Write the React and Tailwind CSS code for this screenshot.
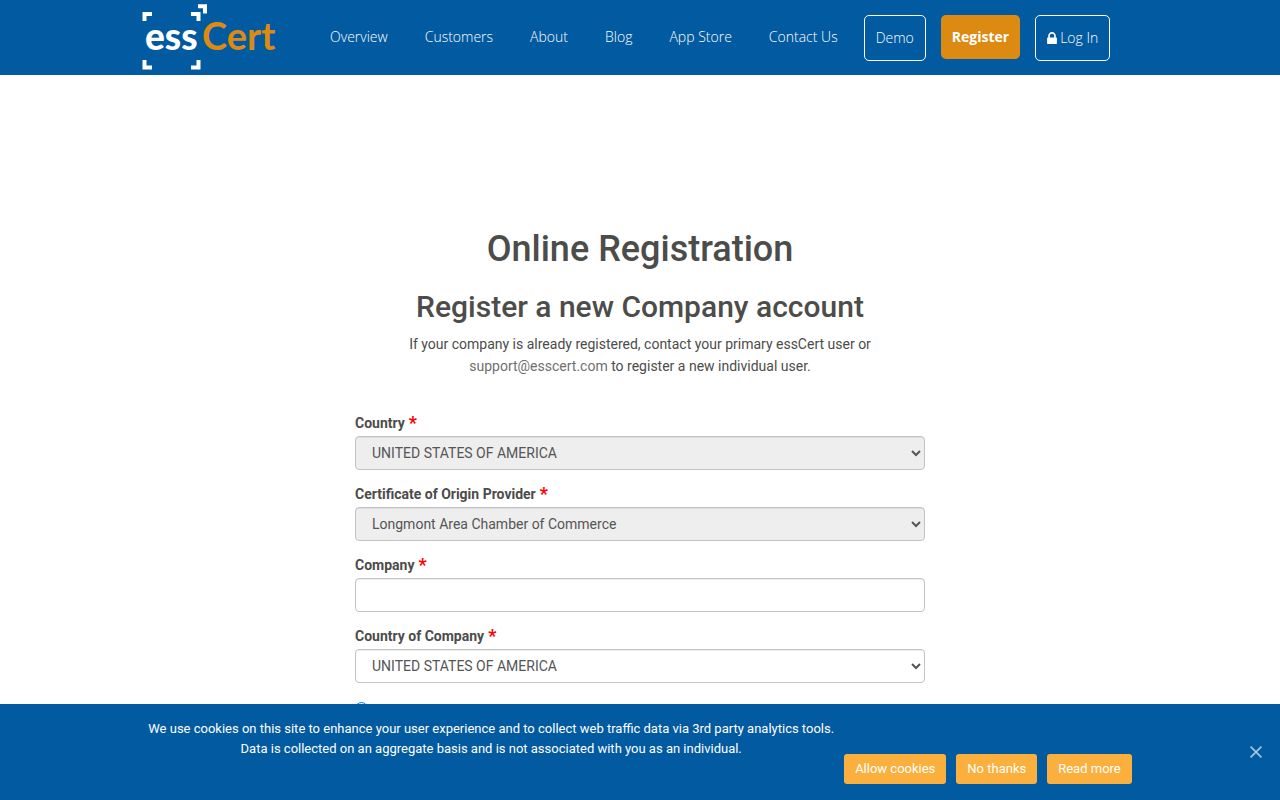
import React from "react";

const navLinks = ["Overview", "Customers", "About", "Blog", "App Store", "Contact Us"];

const Logo = () => (
  <a href="#home" aria-label="essCert" className="shrink-0">
    <svg width="136" height="75" viewBox="0 0 136 75" className="font-['Lato',sans-serif] font-bold">
      <g fill="#fff">
        <path d="M0.5 12h9.5v4H4.5v5h-4z" />
        <path d="M49 12h9.5v9h-4v-5H49z" />
        <path d="M56 4.3h9v9.2h-4V8.3h-5z" />
        <path d="M0.5 60h4v5.5H10v4H0.5z" />
        <path d="M54.5 60h4v9.5H49v-4h5.5z" />
      </g>
      <text x="3" y="50" fontSize="37" fill="#fff" className="font-black">ess</text>
      <text x="60" y="50" fontSize="38" fill="#dd8a12">Cert</text>
    </svg>
  </a>
);

const LockIcon = () => (
  <svg width="10" height="12" viewBox="0 0 1152 1408" fill="currentColor">
    <path
      transform="matrix(1 0 0 -1 0 1408)"
      d="M320 768h512v192q0 106-75 181t-181 75-181-75-75-181v-192zm832-96v-576q0-40-28-68t-68-28H96q-40 0-68 28T0 96v576q0 40 28 68t68 28h32v192q0 184 132 316t316 132 316-132 132-316V768h32q40 0 68-28t28-68z"
    />
  </svg>
);

const Header = () => (
  <header className="bg-[#025aa0] font-['Open_Sans',sans-serif] text-sm font-light text-white">
    <div className="mx-auto flex max-w-[996px] items-start">
      <Logo />
      <nav className="ml-[52px] flex items-start">
        <ul className="mr-[26px] flex gap-[37px] pt-[27px]">
          {navLinks.map((link) => (
            <li key={link}>
              <a href="#nav" className="whitespace-nowrap">{link}</a>
            </li>
          ))}
        </ul>
        <div className="flex items-start gap-[15px] pt-[15px]">
          <a href="#demo" className="rounded-[5px] border border-white px-[11px] py-3">
            Demo
          </a>
          <a href="#register" className="rounded-[5px] bg-[#dd8a12] px-[11px] py-3 font-bold">
            Register
          </a>
          <a
            href="#login"
            className="flex items-center gap-[3px] whitespace-nowrap rounded-[5px] border border-white px-[11px] py-3"
          >
            <LockIcon />
            Log In
          </a>
        </div>
      </nav>
    </div>
  </header>
);

const controlClass =
  "block h-[34px] w-full rounded border border-[#c4c4c4] px-3 text-sm text-[#555] shadow-[inset_0_1px_1px_rgba(0,0,0,0.075)]";

const Field = ({ id, label, children }) => (
  <div className="mb-[13px]">
    <label htmlFor={id} className="mb-[2px] flex h-[22px] items-center gap-1 text-sm font-bold">
      {label}
      <span className="text-lg leading-5 text-[#f00]">*</span>
    </label>
    {children}
  </div>
);

const RegistrationForm = () => (
  <form className="mx-auto mt-[35px] max-w-[570px]">
    <Field id="country" label="Country">
      <select id="country" disabled className={`${controlClass} bg-[#eee] opacity-100`}>
        <option>UNITED STATES OF AMERICA</option>
      </select>
    </Field>
    <Field id="provider" label="Certificate of Origin Provider">
      <select id="provider" disabled className={`${controlClass} bg-[#eee] opacity-100`}>
        <option>Longmont Area Chamber of Commerce</option>
      </select>
    </Field>
    <Field id="company" label="Company">
      <input id="company" type="text" className={`${controlClass} bg-white`} />
    </Field>
    <Field id="companyCountry" label="Country of Company">
      <select id="companyCountry" className={`${controlClass} bg-white`}>
        <option>UNITED STATES OF AMERICA</option>
      </select>
    </Field>
    <input
      type="radio"
      name="accountType"
      aria-label="Account type"
      defaultChecked
      className="mt-[19px] block"
    />
  </form>
);

const CookieBanner = () => (
  <div className="fixed inset-x-0 bottom-0 bg-[#025aa0] pt-[15px] pb-4 text-[13px] leading-5 text-white">
    <div className="flex justify-center gap-[10px]">
      <p className="text-center">
        We use cookies on this site to enhance your user experience and to collect web traffic data via 3rd party analytics tools.
        <br />
        Data is collected on an aggregate basis and is not associated with you as an individual.
      </p>
      <div className="mt-[35px] flex gap-[10px]">
        <button type="button" className="rounded-[3px] bg-[#fbaf3c] px-[11px] py-[5px]">
          Allow cookies
        </button>
        <button type="button" className="rounded-[3px] bg-[#fbaf3c] px-[11px] py-[5px]">
          No thanks
        </button>
        <button type="button" className="rounded-[3px] bg-[#fbaf3c] px-[11px] py-[5px]">
          Read more
        </button>
      </div>
    </div>
    <button type="button" aria-label="Close" className="absolute top-[42px] right-[18px]">
      <svg width="12" height="12" viewBox="0 0 12 12" stroke="#a3c6e3" strokeWidth="1.7">
        <path d="M.6.6l10.8 10.8M11.4.6L.6 11.4" />
      </svg>
    </button>
  </div>
);

export default function App() {
  return (
    <div className="bg-white font-['Roboto',sans-serif] text-[#4c4c4a]">
      <Header />
      <main className="px-4 pt-[154px]">
        <div className="text-center">
          <h1 className="text-4xl leading-10 font-medium">Online Registration</h1>
          <h2 className="mt-5 text-3xl leading-9 font-medium">Register a new Company account</h2>
          <p className="mx-auto mt-2 max-w-[480px] text-sm leading-[22px]">
            If your company is already registered, contact your primary essCert user or{" "}
            <a href="mailto:support@esscert.com" className="text-[#6f6f6f]">support@esscert.com</a> to register a new
            individual user.
          </p>
        </div>
        <RegistrationForm />
      </main>
      <CookieBanner />
    </div>
  );
}
